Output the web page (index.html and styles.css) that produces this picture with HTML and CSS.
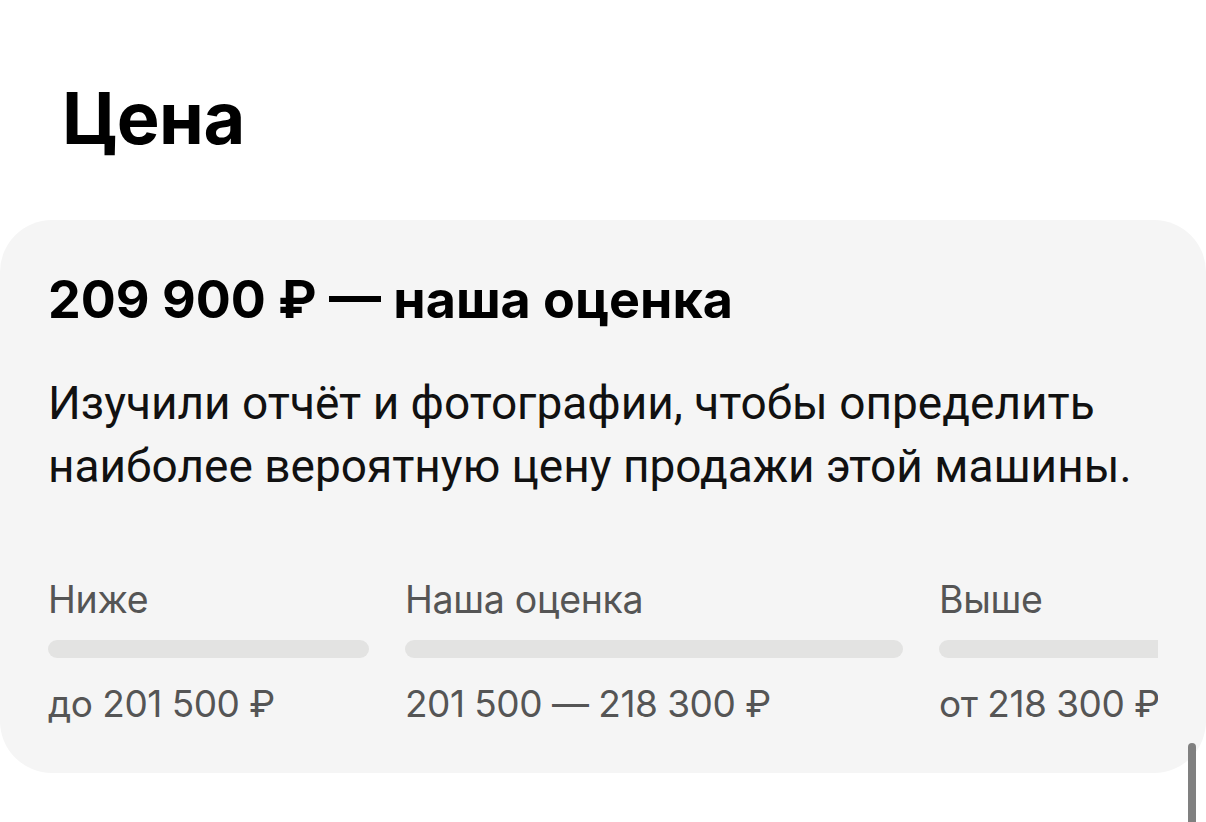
FILE: index.html
```html
<!DOCTYPE html>
<html lang="ru">
<head>
  <meta charset="UTF-8">
  <title>Цена</title>
  <link rel="stylesheet" href="styles.css">
</head>
<body>
  <h1 class="title">Цена</h1>

  <div class="card">
    <h2 class="estimate">209 900 ₽ — наша оценка</h2>
    <p class="desc">Изучили отчёт и фотографии, чтобы определить наиболее вероятную цену продажи этой машины.</p>

    <div class="ranges">
      <div class="range range-low">
        <div class="range-label">Ниже</div>
        <div class="range-bar"></div>
        <div class="range-value">до 201 500 ₽</div>
      </div>
      <div class="range range-mid">
        <div class="range-label">Наша оценка</div>
        <div class="range-bar"></div>
        <div class="range-value">201 500 — 218 300 ₽</div>
      </div>
      <div class="range range-high">
        <div class="range-label">Выше</div>
        <div class="range-bar"></div>
        <div class="range-value">от 218 300 ₽</div>
      </div>
    </div>
  </div>

  <div class="scrollbar"></div>
</body>
</html>
```

FILE: styles.css
```css
body {
  margin: 0;
  background: #ffffff;
  font-family: Inter, "Noto Sans", sans-serif;
  color: #000;
  overflow: hidden;
}

.title {
  margin: 0;
  padding: 76px 0 0 62px;
  font-size: 72px;
  font-weight: 700;
  line-height: 84px;
  letter-spacing: -0.5px;
}

.card {
  margin-top: 60px;
  background: #f5f5f5;
  border-radius: 52px;
  padding: 48px 48px 45px 48px;
}

.estimate {
  margin: 0;
  font-size: 52px;
  font-weight: 700;
  line-height: 64px;
}

.desc {
  margin: 40px 0 0 0;
  font-family: Roboto, Inter, sans-serif;
  font-size: 46px;
  line-height: 63px;
  color: #111;
}

.ranges {
  display: flex;
  gap: 36px;
  margin-top: 80px;
  overflow: hidden;
}

.range {
  flex-shrink: 0;
}

.range-low { width: 321px; }
.range-mid { width: 498px; }
.range-high { width: 320px; }

.range-label {
  font-size: 37.5px;
  line-height: 44px;
  color: #555;
  letter-spacing: -0.3px;
}

.range-bar {
  height: 18px;
  border-radius: 9px;
  background: #e3e3e2;
  margin-top: 18px;
}

.range-value {
  margin-top: 22px;
  font-size: 37px;
  line-height: 48px;
  color: #555;
  letter-spacing: -0.5px;
  white-space: nowrap;
}

.scrollbar {
  position: absolute;
  left: 1188px;
  top: 743px;
  width: 8px;
  height: 90px;
  border-radius: 4px;
  background: #808080;
}
```
